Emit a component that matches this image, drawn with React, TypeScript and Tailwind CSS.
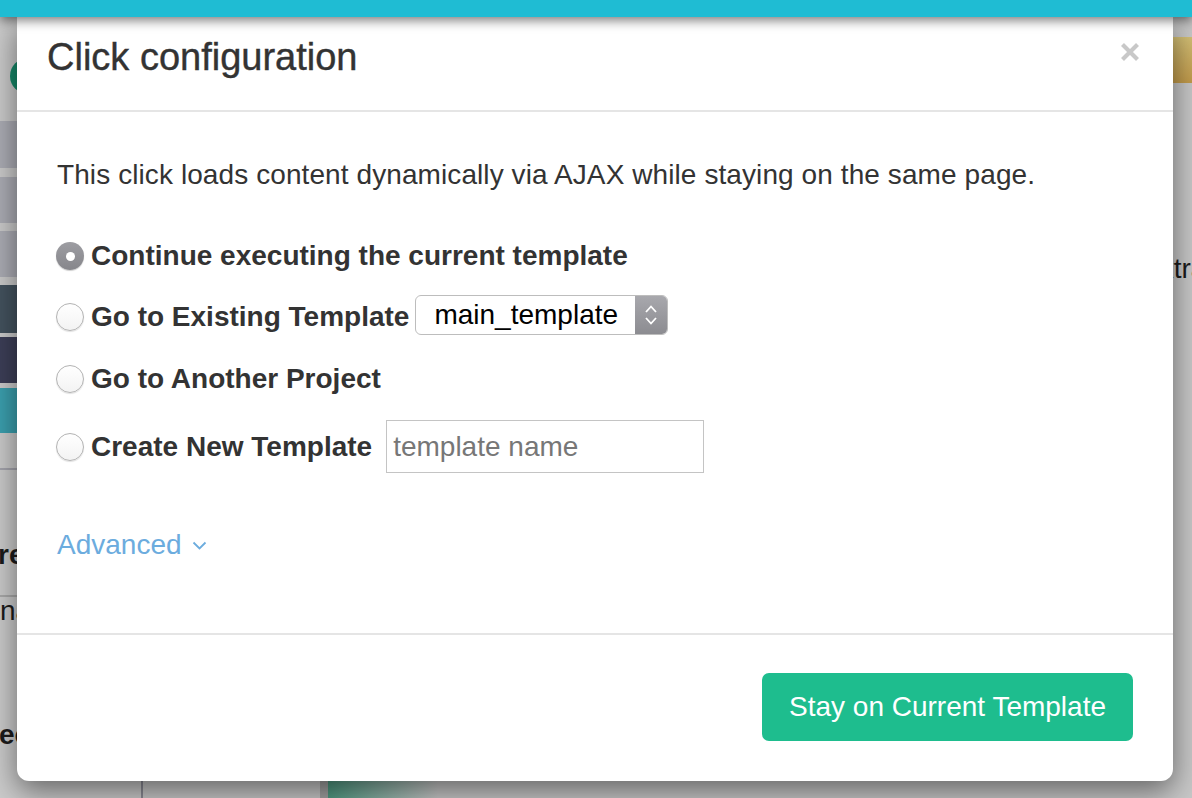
import React from "react";

function Radio({ checked }: { checked?: boolean }) {
  if (checked) {
    return (
      <span className="flex h-[28px] w-[28px] shrink-0 items-center justify-center rounded-full bg-gradient-to-b from-[#9d9da2] to-[#86868b] shadow-[0_1px_1px_rgba(0,0,0,0.2)]">
        <span className="h-[9px] w-[9px] rounded-full bg-white" />
      </span>
    );
  }
  return (
    <span className="h-[28px] w-[28px] shrink-0 rounded-full border border-[#b3b3b3] bg-gradient-to-b from-white to-[#f3f3f3] shadow-[0_1px_1px_rgba(0,0,0,0.12)]" />
  );
}

export default function App() {
  return (
    <div className="relative h-[798px] w-[1192px] overflow-hidden bg-[#c8c8c8] font-['Liberation_Sans',Arial,sans-serif]">
      {/* page behind the backdrop */}
      <div className="flex h-full flex-col">
        <div className="relative z-20 h-[17px] shrink-0 bg-[#1fbcd3] shadow-[0_3px_12px_rgba(0,0,0,0.55)]" />
        <div className="flex flex-1">
          {/* sidebar */}
          <aside className="flex w-[141px] flex-col bg-[#cbcbcb] text-[28px] text-[#1c1c1c]">
            <div className="h-[104px] pl-[10px] pt-[41px]">
              <div className="h-[36px] w-[36px] rounded-full bg-[#168a6a]" />
            </div>
            <div className="h-[47px] bg-[#acadb5]" />
            <div className="mt-[9px] h-[46px] bg-[#acadb5]" />
            <div className="mt-[8px] h-[46px] bg-[#acadb5]" />
            <div className="mt-[8px] h-[48px] bg-[#44535f]" />
            <div className="mt-[4px] h-[46px] bg-[#3d3f58]" />
            <div className="mt-[5px] h-[45px] bg-[#3ba0af]" />
            <div className="h-[37px] border-b-2 border-[#a4a4ac]" />
            <div className="h-[65px]" />
            <div className="-ml-[2px] font-bold leading-[40px]">results</div>
            <div className="h-[22px] border-b-2 border-[#a9a9a9]" />
            <div className="leading-[28px]">name</div>
            <div className="h-[90px]" />
            <div className="-ml-[1px] font-bold leading-[40px]">ected</div>
          </aside>
          <div className="w-[2px] bg-[#8b8b95]" />
          <div className="w-[177px] bg-[#c8c8c8]" />
          <main className="flex flex-1 border-l-[8px] border-[#a3a3a3]">
            <div className="flex flex-1 flex-col justify-end">
              <div className="h-[24px] w-[110px] bg-gradient-to-r from-[#4f9a82] to-transparent" />
            </div>
            <div className="flex w-[62px] flex-col pt-[20px]">
              <div className="ml-[43px] h-[46px] bg-gradient-to-b from-[#d3bf75] to-[#c29b4b]" />
              <div className="mt-[166px] whitespace-nowrap pl-[11px] text-[28px] leading-[40px] text-[#1c1c1c]">
                Extra
              </div>
            </div>
          </main>
        </div>
      </div>

      {/* modal */}
      <div className="absolute left-[17px] top-[17px] z-10 w-[1156px] rounded-b-[12px] bg-white text-[#333] shadow-[0_10px_30px_rgba(0,0,0,0.5)]">
        <div className="flex items-start justify-between border-b-2 border-[#e5e5e5] pb-[33px] pl-[30px] pr-[33px] pt-[20px]">
          <h4 className="text-[38px] leading-[40px] [-webkit-text-stroke:0.4px_#333]">Click configuration</h4>
          <button className="mt-[5px]" aria-label="Close">
            <svg width="20" height="20" viewBox="0 0 20 20">
              <path d="M2.5 2.5L17.5 17.5M17.5 2.5L2.5 17.5" stroke="#c8c8c8" strokeWidth="4.2" />
            </svg>
          </button>
        </div>

        <div className="px-[40px] pb-[68px] pt-[43px] text-[28px] leading-[40px]">
          <p className="tracking-[0.09px]">
            This click loads content dynamically via AJAX while staying on the same page.
          </p>

          <div className="-ml-[1px] mt-[41px] flex h-[40px] items-center gap-[7px] font-bold">
            <Radio checked />
            <span>Continue executing the current template</span>
          </div>

          <div className="-ml-[1px] mt-[21px] flex h-[40px] items-center gap-[7px] font-bold">
            <Radio />
            <span>Go to Existing Template</span>
            <div className="-ml-[1px] mb-[5px] flex h-[40px] w-[253px] shrink-0 overflow-hidden rounded-[6px] border border-[#bdbdbd] bg-white font-normal text-black">
              <span className="flex-1 pl-[18px] leading-[38px]">main_template</span>
              <span className="flex w-[32px] items-center justify-center bg-gradient-to-b from-[#a8a8ad] to-[#8c8c91]">
                <svg width="14" height="26" viewBox="0 0 14 26" fill="none">
                  <path d="M2 10L7 4.5L12 10M2 16L7 21.5L12 16" stroke="white" strokeWidth="1.8" />
                </svg>
              </span>
            </div>
          </div>

          <div className="-ml-[1px] mt-[22px] flex h-[40px] items-center gap-[7px] font-bold">
            <Radio />
            <span>Go to Another Project</span>
          </div>

          <div className="-ml-[1px] mt-[21px] flex h-[53px] items-center gap-[7px] font-bold">
            <Radio />
            <span>Create New Template</span>
            <input
              placeholder="template name"
              className="ml-[7px] h-[53px] w-[318px] border border-[#c4c4c4] px-[6px] font-normal text-[#333] outline-none placeholder:text-[#777]"
            />
          </div>

          <div className="mt-[52px] flex items-center gap-[10px] text-[#6cacde]">
            <span>Advanced</span>
            <svg width="15" height="9" viewBox="0 0 15 9" fill="none">
              <path d="M1.5 1.5L7.5 7.5L13.5 1.5" stroke="#6cacde" strokeWidth="1.8" />
            </svg>
          </div>
        </div>

        <div className="flex justify-end border-t-2 border-[#e5e5e5] pb-[40px] pr-[40px] pt-[38px]">
          <button className="h-[68px] rounded-[7px] bg-[#1ebd8e] px-[27px] text-[28px] text-white">
            Stay on Current Template
          </button>
        </div>
      </div>
    </div>
  );
}
